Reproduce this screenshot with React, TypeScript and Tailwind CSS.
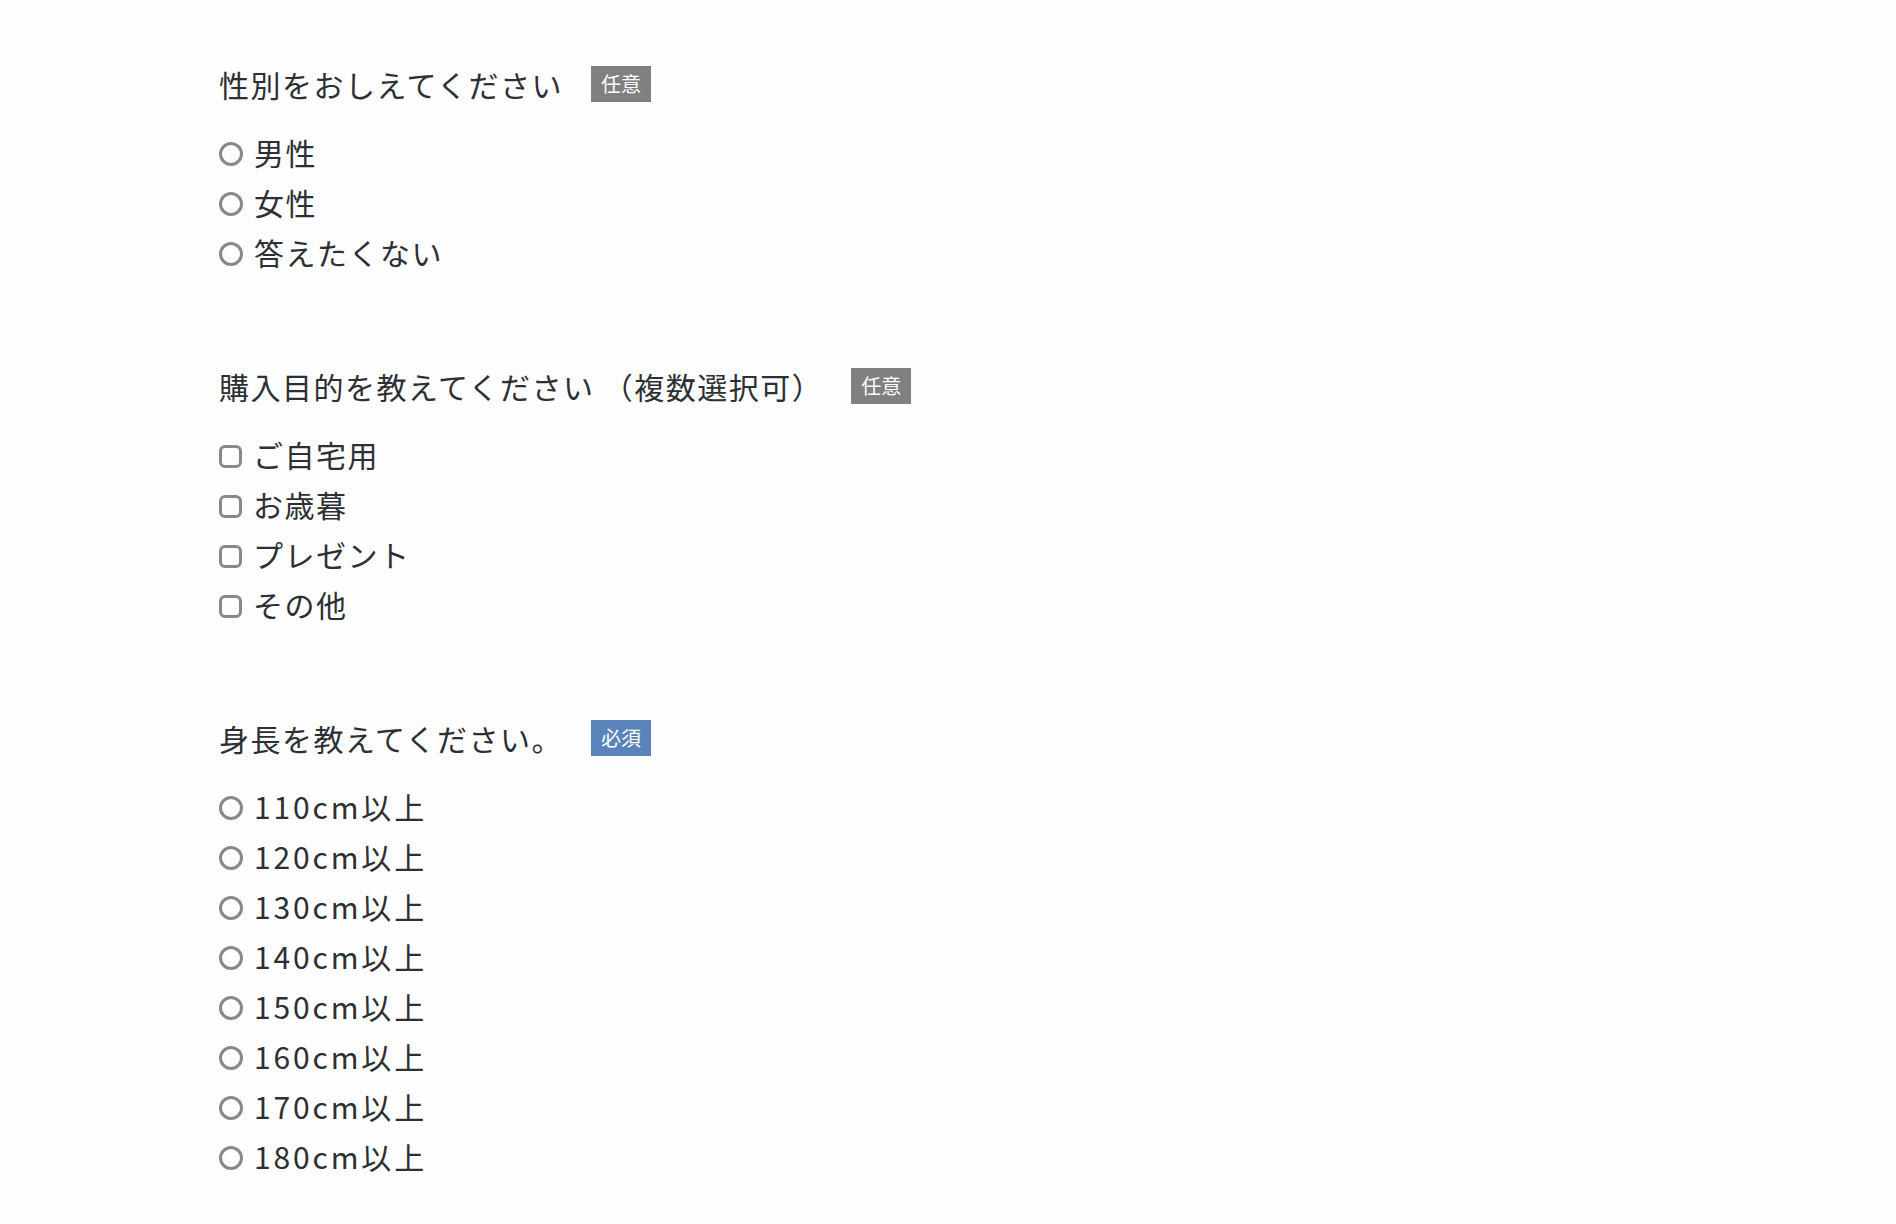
import React from "react";

const font = { fontFamily: '"Noto Sans CJK JP", "Noto Sans", sans-serif' };

interface QuestionProps {
  title: string;
  badge: string;
  required?: boolean;
  type: "radio" | "checkbox";
  name: string;
  options: string[];
  wide?: boolean;
}

const Question: React.FC<QuestionProps> = ({ title, badge, required, type, name, options, wide }) => {
  return (
    <section className="mb-[88px]">
      <div className="flex items-center h-[42px]">
        <h2 className="text-[30px] leading-[42px] tracking-[0.05em] text-[#2c2f33] font-normal">{title}</h2>
        <span
          className={
            required
              ? "ml-[28px] w-[60px] h-[36px] flex items-center justify-center text-[20px] text-white bg-[#5a83b9]"
              : "ml-[28px] w-[60px] h-[36px] flex items-center justify-center text-[20px] text-white bg-[#808080]"
          }
        >
          {badge}
        </span>
      </div>
      <div className="mt-[22px] flex flex-col">
        {options.map((opt) => (
          <label
            key={opt}
            className={
              wide
                ? "flex items-center h-[50px] text-[30px] tracking-[0.095em] text-[#2c2f33]"
                : "flex items-center h-[50px] text-[30px] tracking-[0.05em] text-[#2c2f33]"
            }
          >
            <input
              type={type}
              name={name}
              className={
                type === "radio"
                  ? "appearance-none w-[24px] h-[24px] rounded-full border-[3px] border-[#888] mr-[11px] mt-[4px] shrink-0"
                  : "appearance-none w-[23px] h-[23px] rounded-[6px] border-[3px] border-[#888] mr-[11px] mt-[4px] shrink-0"
              }
            />
            <span>{opt}</span>
          </label>
        ))}
      </div>
    </section>
  );
};

export default function App() {
  return (
    <div className="min-h-[1224px] bg-[#fdfdfd] pl-[219px] pt-[63px]" style={font}>
      <Question
        title="性別をおしえてください"
        badge="任意"
        type="radio"
        name="gender"
        options={["男性", "女性", "答えたくない"]}
      />
      <Question
        title="購入目的を教えてください （複数選択可）"
        badge="任意"
        type="checkbox"
        name="purpose"
        options={["ご自宅用", "お歳暮", "プレゼント", "その他"]}
      />
      <Question
        title="身長を教えてください。"
        badge="必須"
        required
        type="radio"
        name="height"
        wide
        options={["110cm以上", "120cm以上", "130cm以上", "140cm以上", "150cm以上", "160cm以上", "170cm以上", "180cm以上"]}
      />
    </div>
  );
}
